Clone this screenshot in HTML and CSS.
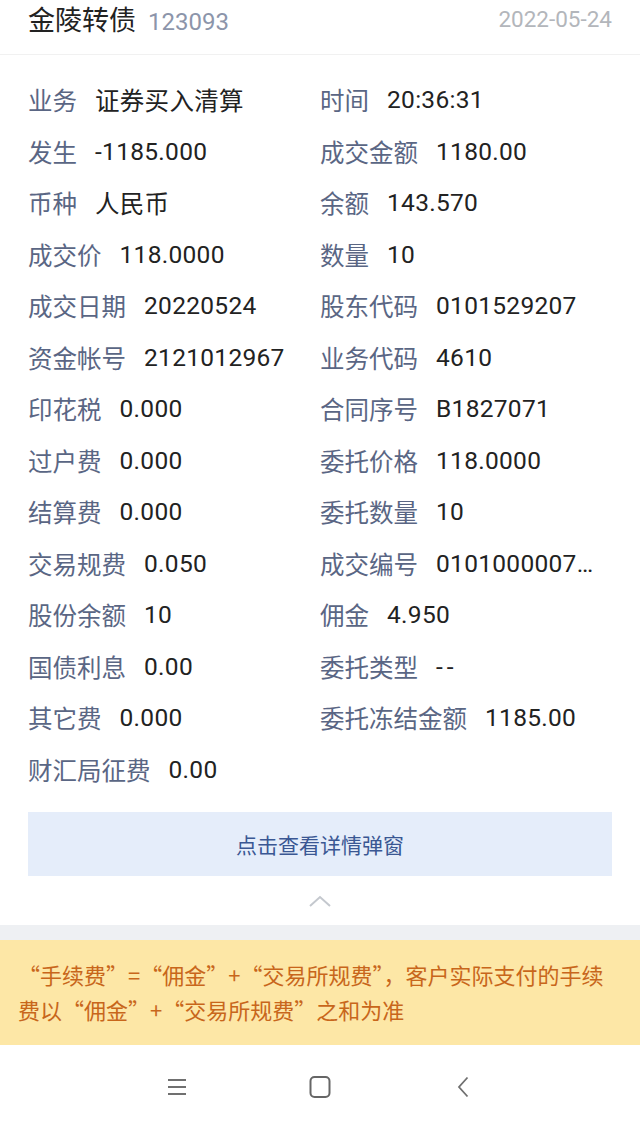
FILE: index.html
```html
<!DOCTYPE html>
<html lang="zh-CN">
<head>
<meta charset="utf-8">
<title>金陵转债</title>
<link rel="stylesheet" href="styles.css">
</head>
<body>
<div class="page">
  <header class="head">
    <div class="title"><span class="name">金陵转债</span><span class="code">123093</span></div>
    <div class="date">2022-05-24</div>
  </header>

  <section class="grid">
    <div class="item"><span class="lab">业务</span><span class="val">证券买入清算</span></div>
    <div class="item"><span class="lab">时间</span><span class="val">20:36:31</span></div>
    <div class="item"><span class="lab">发生</span><span class="val">-1185.000</span></div>
    <div class="item"><span class="lab">成交金额</span><span class="val">1180.00</span></div>
    <div class="item"><span class="lab">币种</span><span class="val">人民币</span></div>
    <div class="item"><span class="lab">余额</span><span class="val">143.570</span></div>
    <div class="item"><span class="lab">成交价</span><span class="val">118.0000</span></div>
    <div class="item"><span class="lab">数量</span><span class="val">10</span></div>
    <div class="item"><span class="lab">成交日期</span><span class="val">20220524</span></div>
    <div class="item"><span class="lab">股东代码</span><span class="val">0101529207</span></div>
    <div class="item"><span class="lab">资金帐号</span><span class="val">2121012967</span></div>
    <div class="item"><span class="lab">业务代码</span><span class="val">4610</span></div>
    <div class="item"><span class="lab">印花税</span><span class="val">0.000</span></div>
    <div class="item"><span class="lab">合同序号</span><span class="val">B1827071</span></div>
    <div class="item"><span class="lab">过户费</span><span class="val">0.000</span></div>
    <div class="item"><span class="lab">委托价格</span><span class="val">118.0000</span></div>
    <div class="item"><span class="lab">结算费</span><span class="val">0.000</span></div>
    <div class="item"><span class="lab">委托数量</span><span class="val">10</span></div>
    <div class="item"><span class="lab">交易规费</span><span class="val">0.050</span></div>
    <div class="item"><span class="lab">成交编号</span><span class="val">0101000007…</span></div>
    <div class="item"><span class="lab">股份余额</span><span class="val">10</span></div>
    <div class="item"><span class="lab">佣金</span><span class="val">4.950</span></div>
    <div class="item"><span class="lab">国债利息</span><span class="val">0.00</span></div>
    <div class="item"><span class="lab">委托类型</span><span class="val dash">--</span></div>
    <div class="item"><span class="lab">其它费</span><span class="val">0.000</span></div>
    <div class="item"><span class="lab">委托冻结金额</span><span class="val">1185.00</span></div>
    <div class="item"><span class="lab">财汇局征费</span><span class="val">0.00</span></div>
  </section>

  <div class="btn">点击查看详情弹窗</div>

  <div class="fold">
    <svg width="24" height="14" viewBox="0 0 24 14"><path d="M2 12 L12 3 L22 12" fill="none" stroke="#c4c8ce" stroke-width="2"/></svg>
  </div>

  <div class="band"></div>

  <div class="notice">“手续费”=“佣金”+“交易所规费”，客户实际支付的手续费以“佣金”+“交易所规费”之和为准</div>

  <nav class="navbar">
    <svg class="ic" width="24" height="24" viewBox="0 0 24 24"><path d="M3 5 H21 M3 12 H21 M3 19 H21" stroke="#707070" stroke-width="1.8" fill="none"/></svg>
    <svg class="ic" width="24" height="24" viewBox="0 0 24 24"><rect x="2.5" y="2" width="19" height="20" rx="4" ry="4" stroke="#666" stroke-width="2" fill="none"/></svg>
    <svg class="ic" width="24" height="24" viewBox="0 0 24 24"><path d="M16.5 2.5 L8 12 L16.5 21.5" stroke="#707070" stroke-width="1.8" fill="none"/></svg>
  </nav>
</div>
</body>
</html>
```

FILE: styles.css
```css
* { box-sizing: border-box; }
html, body {
  margin: 0;
  padding: 0;
  background: #ffffff;
}
body {
  font-family: "Noto Sans CJK SC", "Noto Sans", sans-serif;
  color: #222;
}
.page {
  width: 640px;
  height: 1129px;
  overflow: hidden;
  display: flex;
  flex-direction: column;
}
.head {
  height: 55px;
  flex: none;
  display: flex;
  justify-content: space-between;
  align-items: flex-start;
  padding: 0 28px;
  border-bottom: 1px solid #f1f1f1;
}
.title {
  display: flex;
  align-items: baseline;
  gap: 12px;
  line-height: 38px;
}
.name {
  font-size: 27px;
  color: #222;
}
.code {
  font-family: Roboto, "Noto Sans CJK SC", sans-serif;
  font-size: 24px;
  color: #8c95aa;
}
.date {
  font-family: Roboto, "Noto Sans CJK SC", sans-serif;
  font-size: 22.5px;
  color: #b3b6bb;
  line-height: 38px;
}
.grid {
  display: grid;
  grid-template-columns: 292px 1fr;
  grid-auto-rows: 51.5px;
  padding: 19px 28px 0;
  flex: none;
}
.item {
  display: flex;
  align-items: center;
  gap: 18px;
  white-space: nowrap;
  font-size: 24.5px;
}
.lab {
  color: #5a6684;
}
.val {
  color: #222;
  font-family: Roboto, "Noto Sans CJK SC", sans-serif;
  letter-spacing: 0.3px;
}
.dash {
  letter-spacing: 4px;
}
.btn {
  margin: 17px 28px 0;
  height: 64px;
  flex: none;
  background: #e5edfa;
  color: #3a5793;
  font-size: 21px;
  display: flex;
  align-items: center;
  justify-content: center;
}
.fold {
  height: 49px;
  flex: none;
  display: flex;
  align-items: center;
  justify-content: center;
}
.band {
  height: 15px;
  flex: none;
  background: #eef0f3;
}
.notice {
  flex: none;
  background: #fde7a6;
  color: #c8661b;
  font-size: 22px;
  line-height: 35px;
  padding: 17px 18px 18px;
}
.navbar {
  flex: 1;
  display: flex;
  align-items: center;
  justify-content: center;
  gap: 119px;
}
.ic {
  display: block;
}
```
